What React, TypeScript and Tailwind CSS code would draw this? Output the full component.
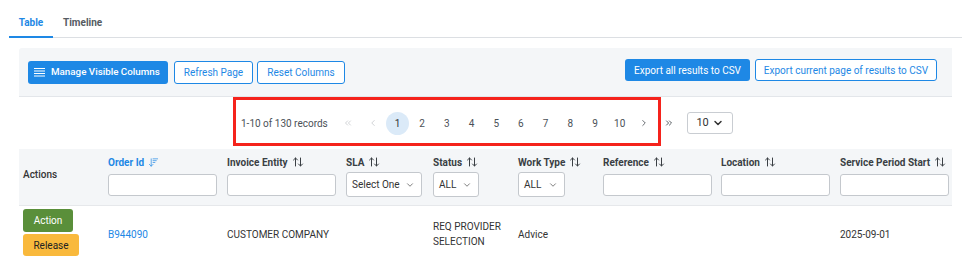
import { ArrowUpDown, ArrowDownWideNarrow, ChevronDown, ChevronLeft, ChevronRight, ChevronsLeft, ChevronsRight } from 'lucide-react';

const columns = [
  { label: 'Order Id', kind: 'input', active: true },
  { label: 'Invoice Entity', kind: 'input' },
  { label: 'SLA', kind: 'select', value: 'Select One', width: 'w-[76px]' },
  { label: 'Status', kind: 'select', value: 'ALL', width: 'w-[46px]' },
  { label: 'Work Type', kind: 'select', value: 'ALL', width: 'w-[47px]' },
  { label: 'Reference', kind: 'input' },
  { label: 'Location', kind: 'input' },
  { label: 'Service Period Start', kind: 'input' },
];

function HamburgerIcon() {
  return (
    <svg width="11" height="9" viewBox="0 0 11 9" fill="none" stroke="currentColor" strokeWidth="1">
      <path d="M0 0.5h11M0 3h11M0 5.5h11M0 8h11" />
    </svg>
  );
}

export default function App() {
  return (
    <div className="relative w-[962px] h-[262px] overflow-hidden bg-white text-[#333] font-['Roboto',sans-serif]">
      {/* tabs */}
      <div className="ml-[9px] flex border-b border-[#dcdfe3] h-[38px] items-end">
        <div className="w-[44px] text-center pb-[6px] border-b-2 border-[#1e88e5] -mb-px text-[10px] font-bold text-[#1e88e5]">
          Table
        </div>
        <div className="px-[10px] pb-[7px] text-[10px] font-bold text-[#555b62]">Timeline</div>
      </div>

      <div className="ml-[19px] mr-[10px]">
        {/* toolbar */}
        <div className="mt-[10px] h-[49px] bg-[#f4f6f8] border-b border-[#e3e6ea] rounded-tl-[3px] flex justify-between pl-[9px] pr-[15px]">
          <div className="flex gap-[4px] pt-[13px]">
            <button className="h-[23px] w-[140px] px-[6px] rounded-[3px] bg-[#1e88e5] text-white text-[9.8px] font-medium flex items-center gap-[6px]">
              <HamburgerIcon />
              Manage Visible Columns
            </button>
            <button className="h-[23px] w-[79px] ml-[2px] rounded-[3px] border border-[#1e88e5] bg-white text-[#1e88e5] text-[10px]">
              Refresh Page
            </button>
            <button className="h-[23px] w-[88px] rounded-[3px] border border-[#1e88e5] bg-white text-[#1e88e5] text-[10px]">
              Reset Columns
            </button>
          </div>
          <div className="flex gap-[5px] pt-[11px]">
            <button className="h-[22px] w-[125px] rounded-[3px] bg-[#1e88e5] text-white text-[10px]">
              Export all results to CSV
            </button>
            <button className="h-[22px] w-[182px] rounded-[3px] border border-[#1e88e5] bg-white text-[#1e88e5] text-[10px]">
              Export current page of results to CSV
            </button>
          </div>
        </div>

        {/* pagination */}
        <div className="h-[52px] flex items-center pl-[222px] text-[10px] text-[#4b5157]">
          <span className="mr-[8px]">1-10 of 130 records</span>
          <div className="flex items-center">
            <span className="w-[24.7px] flex justify-center text-[#b5b9be]">
              <ChevronsLeft size={10} strokeWidth={1.5} />
            </span>
            <span className="w-[24.7px] flex justify-center text-[#b5b9be]">
              <ChevronLeft size={10} strokeWidth={1.5} />
            </span>
            {[1, 2, 3, 4, 5, 6, 7, 8, 9, 10].map((n) => (
              <span key={n} className="w-[24.7px] flex justify-center">
                <span
                  className={
                    n === 1
                      ? 'w-[23px] h-[23px] rounded-full bg-[#dbeaf8] flex items-center justify-center text-[#333]'
                      : 'w-[23px] h-[23px] flex items-center justify-center'
                  }
                >
                  {n}
                </span>
              </span>
            ))}
            <span className="w-[24.7px] flex justify-center text-[#4b5157]">
              <ChevronRight size={10} strokeWidth={2} />
            </span>
            <span className="w-[24.7px] flex justify-center text-[#4b5157]">
              <ChevronsRight size={10} strokeWidth={2.2} />
            </span>
          </div>
          <div className="ml-[6px] w-[46px] h-[22px] border border-[#c9cdd2] rounded-[3px] flex items-center justify-between px-[8px] text-[11px] text-[#333]">
            10
            <ChevronDown size={12} strokeWidth={3} />
          </div>
        </div>

        {/* table header */}
        <div className="grid grid-cols-[89px_119px_119px_87px_85px_85px_118px_119px_1fr] bg-[#f4f6f8] border-b border-[#e6e8eb] h-[57px]">
          <div className="pl-[4px] pt-[18px] text-[10px] font-medium text-[#333]">Actions</div>
          {columns.map((c) => (
            <div key={c.label} className="pt-[6px]">
              <div
                className={
                  c.active
                    ? 'flex items-center gap-[4px] h-[14px] text-[10px] font-bold text-[#1e88e5]'
                    : 'flex items-center gap-[4px] h-[14px] text-[10px] font-bold text-[#3a3f44]'
                }
              >
                {c.label}
                {c.active ? (
                  <ArrowDownWideNarrow size={11} strokeWidth={1.5} />
                ) : (
                  <ArrowUpDown size={12} strokeWidth={2} />
                )}
              </div>
              {c.kind === 'input' ? (
                <div className="mt-[5px] w-[109px] h-[22px] bg-white border border-[#c4c8cd] rounded-[3px]" />
              ) : (
                <div
                  className={
                    'mt-[3px] h-[25px] bg-white border border-[#c4c8cd] rounded-[3px] flex items-center justify-between pl-[5px] pr-[6px] text-[10px] text-[#333] ' +
                    c.width
                  }
                >
                  {c.value}
                  <ChevronDown size={10} strokeWidth={1.5} />
                </div>
              )}
            </div>
          ))}
        </div>

        {/* data row */}
        <div className="grid grid-cols-[89px_119px_119px_87px_85px_85px_118px_119px_1fr] items-center h-[56px] text-[10px] text-[#333]">
          <div className="pl-[4px] pb-[3px] flex flex-col items-start gap-[2px]">
            <button className="w-[50px] h-[23px] rounded-[3px] bg-[#5a8f3a] text-white text-[10px]">Action</button>
            <button className="w-[56px] h-[22px] rounded-[3px] bg-[#f9b93c] text-[#222] text-[10px]">Release</button>
          </div>
          <div className="text-[#1e88e5]">B944090</div>
          <div>CUSTOMER COMPANY</div>
          <div />
          <div className="leading-[15px]">
            REQ PROVIDER
            <br />
            SELECTION
          </div>
          <div>Advice</div>
          <div />
          <div />
          <div>2025-09-01</div>
        </div>
      </div>

      {/* highlight */}
      <div className="absolute left-[233px] top-[97px] w-[428px] h-[49px] border-[3px] border-[#f5231c]" />
    </div>
  );
}
